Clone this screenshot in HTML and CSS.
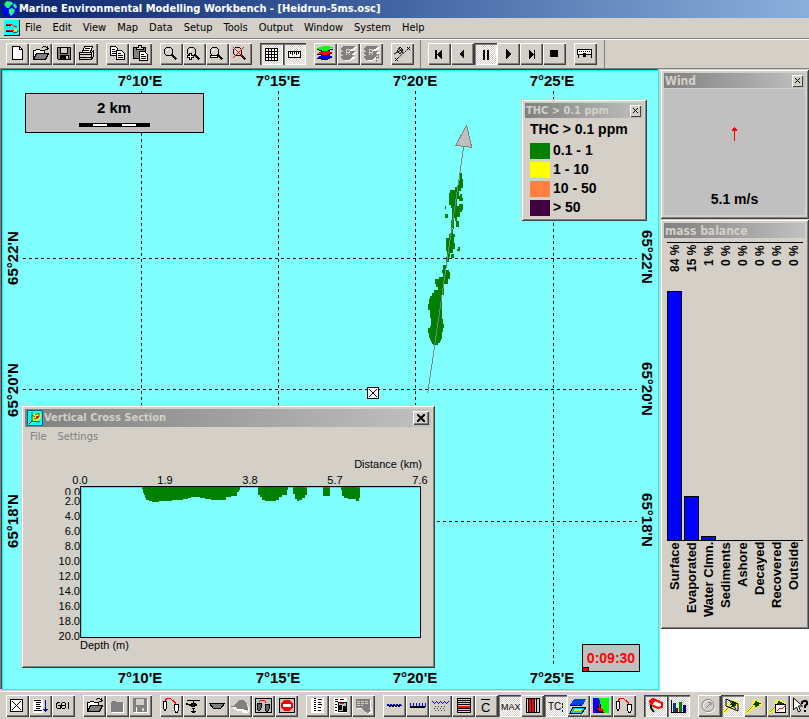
FILE: index.html
```html
<!DOCTYPE html>
<html lang="en">
<head>
<meta charset="utf-8">
<title>Marine Environmental Modelling Workbench</title>
<link rel="stylesheet" href="styles.css">
</head>
<body>
<svg class="defs" aria-hidden="true">
  <symbol id="open" viewBox="0 0 23 22"><path d="M4.500 16.500v-9h2l1-1h3l1 1h4v3" fill="#fff" stroke="#000"/><path d="M4.500 16.500l3-6h12l-3 6z" fill="#808080" stroke="#000"/><path d="M13 4.500h1M14 3.500h3M17 4.500h1M18 5h1v1M16 6.500h3M18.500 3v4" stroke="#000"/></symbol>
  <symbol id="save" viewBox="0 0 23 22"><path d="M5.500 4.500h13v12h-12l-1-1z" fill="#808080" stroke="#000"/><path d="M8 5h8v6H8z" fill="#d4d0c8"/><path d="M8.500 5v5.500h7V5" fill="none" stroke="#000"/><path d="M8 12h9v5H8z" fill="#000"/><path d="M14 13h2v3h-2z" fill="#d4d0c8"/></symbol>
  <symbol id="lens" viewBox="0 0 23 22"><path d="M6.500 4.500h4l2 2v4l-2 2h-4l-2-2v-4z" fill="#d4d0c8" stroke="#000"/><path d="M6 8V7h1V6h2" fill="none" stroke="#fff"/><path d="M11.500 11.500l5 5" stroke="#000" stroke-width="2"/></symbol>
  <symbol id="layers" viewBox="0 0 23 22"><path d="M5 14h13v1h-2v1h-2v1H7v-1H5zM5 10h13v1h-2v1h-2v1H7v-1H5zM5 6h14v1h-3v1h-2v1H7V8H5z" fill="#000"/><path d="M3 14h2v-1h3v-1h8v1h2v1h-2v1h-2v1H8v-1H4z" fill="#00f"/><path d="M3 10h2V9h3V8h8v1h2v1h-2v1h-2v1H8v-1H4z" fill="red"/><path d="M3 5h2V4h3V3h8v1h3v1h-3v2h-2v1H8V7H4z" fill="#0f0"/><path d="M3 6h2v1H3zM3 11h2v1H3zM3 15h2v1H3z" fill="#000"/></symbol>
  <symbol id="layers-off" viewBox="0 0 23 22"><path d="M5 15l3-1h11l-3 2-4 2H8zM4 11l4-2h12l-3 3-4 2H8zM4 7l4-3h12l-3 3-4 2H8z" fill="#fff"/><path d="M3 14l4-2h11l-4 3-2 2H7zM3 10l4-2h12l-4 3-2 2H7zM3 6l4-3h12l-4 3-5 3H7z" fill="#808080"/><path d="M9.500 6v6M10 6.500h2.500v2.500H10M11 9.500l2 2.500" stroke="#d4d0c8" fill="none"/></symbol>
  <symbol id="pins" viewBox="0 0 23 22"><path d="M3.500 6.500h3v7l-1 1.500h-1l-1-1.500z" fill="#fff" stroke="#000"/><path d="M14.500 9.500h4v6l-1 1.500h-2l-1-1.500z" fill="#fff" stroke="#000"/><path d="M5 5.500l2-2h3l3 2 3 3" fill="none" stroke="red"/></symbol>
  <symbol id="pins-box" viewBox="0 0 23 22"><path d="M3.500 3.500h16v14h-16z" fill="#c0c0c0" stroke="#000" stroke-width="1"/><path d="M5 8h4v5l-1 2H6l-1-2zM13 9h4v5l-1 2h-2l-1-2z" fill="#606060" stroke="#000"/><path d="M7.500 7l1-1.500h4l2 3" fill="none" stroke="red"/></symbol>
  <symbol id="spill" viewBox="0 0 23 22"><path d="M9 5h2l1 1 3-1 1 2h2v4h-3l-2 2-1-1h-2l-6 6H2v-2l6-6z" fill="#ff0"/><path d="M11 6h2v1h2v1h2v1h-2v2h-2v1h-2v-2H9V9h1V8h1z" fill="#042"/><path d="M3 17l6-6" stroke="#808080"/></symbol>
</svg>

<header class="titlebar">
  <svg class="globe" viewBox="0 0 16 16"><circle cx="8" cy="8" r="8" fill="#00f"/><path d="M2 3l3-3 5 1 1 2-3 2-1 2H5L3 5zM7 8l3-1 3 2-1 3-3 3-2-3zM12 2l3 3-1 3-3-3z" fill="#2f6"/><path d="M1 11l4 4 4 1-5-1z" fill="#006"/></svg>
  <h1>Marine Environmental Modelling Workbench - [Heidrun-5ms.osc]</h1>
</header>

<nav class="menubar" aria-label="Main menu">
  <svg class="docicon" viewBox="0 0 16 16"><path d="M0 0h16v16H0z" fill="#0ff"/><path d="M0 15.500h15.500V0" fill="none" stroke="#000"/><path d="M2 4.500h6l2 2h3M2 10.500h8" stroke="red" fill="none"/><path d="M2 5.500h5M2 11.500h7" stroke="#006" fill="none"/><path d="M10 9h3v2h-3z" fill="#ff0"/><path d="M9 12.500h4l1-2" stroke="#063" fill="none"/></svg>
  <button>File</button><button>Edit</button><button>View</button><button>Map</button><button>Data</button><button>Setup</button><button>Tools</button><button>Output</button><button>Window</button><button>System</button><button>Help</button>
</nav>

<div class="toolbar toolbar-top" role="toolbar" aria-label="Main tools">
  <div class="group">
    <button class="tool" aria-label="New"><svg viewBox="0 0 23 22"><path d="M6.500 3.500h7l3 3v10h-10z" fill="#fff" stroke="#000"/><path d="M13.500 3.500v3h3" fill="none" stroke="#000"/></svg></button>
    <button class="tool" aria-label="Open"><svg><use href="#open"/></svg></button>
    <button class="tool" aria-label="Save"><svg><use href="#save"/></svg></button>
    <button class="tool" aria-label="Print"><svg viewBox="0 0 23 22"><path d="M7.500 9l2-5.500h8L15.500 9" fill="#fff" stroke="#000"/><path d="M10 5.500h5M9 7.500h5" stroke="#000"/><path d="M4.500 9.500h12l2-2v6l-2 3h-12z" fill="#d4d0c8" stroke="#000"/><path d="M4 11.500h13M4 14.500h13M16.500 9v7" stroke="#000"/><path d="M12 13h3" stroke="#fff"/></svg></button>
  </div>
  <div class="group">
    <button class="tool" aria-label="Copy"><svg viewBox="0 0 23 22"><path d="M4.500 3.500h5l2 2v7h-7z" fill="#fff" stroke="#000"/><path d="M6 6.500h3M6 8.500h4M6 10.500h4" stroke="#000"/><path d="M10.500 7.500h5l3 3v6h-8z" fill="#fff" stroke="#000"/><path d="M12 10.500h3M12 12.500h5M12 14.500h5" stroke="#000"/></svg></button>
    <button class="tool" aria-label="Paste"><svg viewBox="0 0 23 22"><path d="M4.500 4.500h12v11h-12z" fill="#808080" stroke="#000"/><path d="M7.500 6.500v-2h2v-2h3v2h2v2z" fill="#d4d0c8" stroke="#000"/><path d="M10.500 8.500h5l3 3v6h-8z" fill="#fff" stroke="#000"/><path d="M12 11.500h3M12 13.500h5M12 15.500h5" stroke="#000"/></svg></button>
  </div>
  <div class="group">
    <button class="tool" aria-label="Zoom"><svg><use href="#lens"/></svg></button>
    <button class="tool" aria-label="Zoom in"><svg viewBox="0 0 23 22"><use href="#lens"/><path d="M6.500 10.500h2v2h2v2h-2v2h-2v-2h-2v-2h2z" fill="#fff" stroke="#000"/></svg></button>
    <button class="tool" aria-label="Zoom out"><svg viewBox="0 0 23 22"><use href="#lens"/><path d="M4.500 12.500h7v2h-7z" fill="#fff" stroke="#000"/></svg></button>
    <button class="tool" aria-label="Cancel zoom"><svg viewBox="0 0 23 22"><use href="#lens"/><path d="M4 4l11 11M15 4L4 15" stroke="red"/></svg></button>
  </div>
  <div class="group">
    <button class="tool pressed" aria-label="Grid" aria-pressed="true"><svg viewBox="0 0 23 22"><path d="M5.500 5.500h12v12h-12zM8.500 5v13M11.500 5v13M14.500 5v13M5 8.500h13M5 11.500h13M5 14.500h13" fill="#fff" stroke="#000"/></svg></button>
    <button class="tool pressed" aria-label="Scale" aria-pressed="true"><svg viewBox="0 0 23 22"><path d="M5.500 8.500h12v6h-12z" fill="#fff" stroke="#000"/><path d="M7.500 9v2M9.500 9v3M11.500 9v2M13.500 9v3M15.500 9v2" stroke="#000"/></svg></button>
  </div>
  <div class="group">
    <button class="tool" aria-label="Layers"><svg><use href="#layers"/></svg></button>
    <button class="tool" aria-label="Reset layers" disabled><svg><use href="#layers-off"/></svg></button>
    <button class="tool" aria-label="Query layers" disabled><svg viewBox="0 0 23 22"><use href="#layers-off"/><path d="M14.500 13v-2h4v3h-2v2M16.500 17v2" stroke="#808080" fill="none"/></svg></button>
  </div>
  <div class="group">
    <button class="tool" aria-label="Track"><svg class="smooth" viewBox="0 0 23 22"><path d="M4 15l3 3M4 18l3-3M16 4l3 3M16 7l3-3M3 11l9-5M8 5l4 5M6 8l3-4 3 3-3 4z" fill="none" stroke="#000"/><path d="M7 15l9-8" stroke="#000" stroke-dasharray="2 1"/></svg></button>
  </div>
  <div class="group divided">
    <button class="tool" aria-label="First"><svg viewBox="0 0 23 22"><path d="M7 7h2v9H7zM14 7v9l-5-4.500z"/></svg></button>
    <button class="tool" aria-label="Back"><svg viewBox="0 0 23 22"><path d="M13 6v10l-5-5z"/></svg></button>
    <button class="tool pressed" aria-label="Pause" aria-pressed="true"><svg viewBox="0 0 23 22"><path d="M9 7h2v10H9zM13 7h2v10h-2z"/></svg></button>
    <button class="tool" aria-label="Play"><svg viewBox="0 0 23 22"><path d="M9 6v10l5-5z"/></svg></button>
    <button class="tool" aria-label="Last"><svg viewBox="0 0 23 22"><path d="M9 7v9l5-4.500zM14 7h1v9h-1z"/></svg></button>
    <button class="tool" aria-label="Stop"><svg viewBox="0 0 23 22"><path d="M7 7h8v7H7z"/></svg></button>
  </div>
  <div class="group last">
    <button class="tool" aria-label="Time slider"><svg viewBox="0 0 23 22"><path d="M3.500 6.500h14v5h-14z" fill="#fff" stroke="#000"/><path d="M5 8.500h12" stroke="#000" stroke-dasharray="1 1"/><path d="M9 10h3v4H9zM4 12h1v3H4zM17 12h1v3h-1z"/></svg></button>
  </div>
</div>

<main class="workspace">
  <section class="map" aria-label="Map">
    <svg class="chart" viewBox="3 71 654 618" preserveAspectRatio="xMinYMin meet">
      <g class="graticule">
        <path d="M141.500 91V665M278.500 91V665M415.500 91V665M553.500 91V665"/>
        <path d="M23 258.500H637M23 389.500H637M23 521.500H637"/>
      </g>
      <g class="coords">
        <text x="140" y="86">7°10'E</text><text x="278" y="86">7°15'E</text><text x="415" y="86">7°20'E</text><text x="552" y="86">7°25'E</text>
        <text x="140" y="683">7°10'E</text><text x="278" y="683">7°15'E</text><text x="415" y="683">7°20'E</text><text x="552" y="683">7°25'E</text>
        <text transform="translate(18 258) rotate(-90)">65°22'N</text><text transform="translate(18 390) rotate(-90)">65°20'N</text><text transform="translate(18 521) rotate(-90)">65°18'N</text>
        <text transform="translate(642 257) rotate(90)">65°22'N</text><text transform="translate(642 389) rotate(90)">65°20'N</text><text transform="translate(642 520) rotate(90)">65°18'N</text>
      </g>
      <g class="scalebar">
        <rect x="25.500" y="93.500" width="178" height="39" fill="#c0c0c0" stroke="#000"/>
        <text x="114" y="113">2 km</text>
        <path d="M79 123h71v4H79z"/><path d="M93 124h14v2H93zM122 124h14v2h-14z" fill="#fff"/>
      </g>
      <svg x="400" y="100" width="260" height="300" viewBox="0 0 780 900">
        <path fill="green" d="M180 219h6v18h3v26h-6v9h-6v15h3v-6h6v12h3v9h-12v-6h-6v22h6v-6h12v18h-3v6h-6v15h-9v13h6v18h-9v-18h-3v-9h-3v33h-9v15h12v9h-3v18h3v18h-6v10h-9v14h-3v14h-9v-14h3v-18h-3v-39h9v-12h12v-18h-6v-25h3v-36h-3v-10h-6v-36h3v-9h15v-9h6v-6h6v-15h3z"/>
        <path fill="green" d="M135 317h3v9h-3zM135 343h9v12h-9zM174 440h6v14h-8v-8h2zM154 463h7v12h-7zM130 496h8v14h9v6h3v22h-6v14h-12v32h-6v73h3v16h3v12h-3v12h-3v18l-7 13h-6v8H100l-12-22v-15h-3v-16h5v-6h3v-24h-3v-22h-6v-18h3v-16h3v-10h6v-8h6v-10h12v-8h-6v-10h-3v-13h12v-6h12v-14h-3z"/>
        <path d="M191 140L83 880" stroke="#808080" stroke-width="3"/>
        <path d="M200 76l15 66-48-6z" fill="#c0c0c0" stroke="#808080" stroke-width="3"/>
      </svg>
      <g class="site"><path d="M367.500 387.500h11v11h-11z" fill="#fff"/><path d="M369 389l8 8M377 389l-8 8"/></g>
    </svg>

    <div class="clock"><time>0:09:30</time><i></i></div>

    <section class="window legend">
      <header class="caption"><h2>THC &gt; 0.1 ppm</h2><button class="close" aria-label="Close"><svg viewBox="0 0 7 7"><path d="M1 1l5 5M6 1L1 6"/></svg></button></header>
      <h3>THC &gt; 0.1 ppm</h3>
      <ul>
        <li><i class="c1"></i>0.1 - 1</li><li><i class="c2"></i>1 - 10</li><li><i class="c3"></i>10 - 50</li><li><i class="c4"></i>&gt; 50</li>
      </ul>
    </section>

    <section class="window section">
      <header class="caption">
        <svg class="icon" viewBox="0 0 16 16"><path d="M0 0h16v16H0z" fill="#0ff"/><path d="M.5.5h15v15H.5z" fill="none" stroke="#067"/><path d="M5 4h3l4-2 2 3-1 4-4 2-3 1z" fill="#ff0"/><path d="M5 2v9l8 1M5 5l3 2M8 5l4-2v4M7 9l4-1" fill="none" stroke="#063"/><path d="M9 6h3v2H9z" fill="red"/><path d="M2 14l3-3" stroke="#000"/></svg>
        <h2>Vertical Cross Section</h2><button class="close big" aria-label="Close"><svg viewBox="0 0 8 8"><path d="M0 0l8 8M8 0L0 8"/></svg></button>
      </header>
      <nav class="submenu" aria-label="Cross section menu"><button disabled>File</button><button disabled>Settings</button></nav>
      <svg class="profile" viewBox="25 447 406 217">
        <text x="422" y="468" class="end">Distance (km)</text>
        <g class="mid"><text x="80" y="484">0.0</text><text x="165" y="484">1.9</text><text x="250" y="484">3.8</text><text x="335" y="484">5.7</text><text x="420" y="484">7.6</text></g>
        <g class="end"><text x="80" y="496">0.0</text></g>
        <path d="M60 495h20v12H60z" fill="#d4d0c8"/>
        <g class="end"><text x="80" y="505">2.0</text><text x="80" y="520">4.0</text><text x="80" y="535">6.0</text><text x="80" y="550">8.0</text><text x="80" y="565">10.0</text><text x="80" y="580">12.0</text><text x="80" y="595">14.0</text><text x="80" y="610">16.0</text><text x="80" y="625">18.0</text><text x="80" y="640">20.0</text></g>
        <text x="80" y="649">Depth (m)</text>
        <rect x="80.500" y="486.500" width="340" height="151" fill="#80ffff" stroke="#000"/>
        <path d="M81.500 637V487.500H420" stroke="#0ff" fill="none"/>
        <path d="M142 487h98v3h-1v2h-2v4h-6v1h-5v3h-15v-1h-6v-1h-5v-1h-9v1h-3v1h-5v1h-11v1h-13v1h-7v-1h-3v-1h-3v-2h-1v-3h-1zM258 487h30v3h-1v5h-5v2h-3v3h-3v1h-11v-1h-3v-3h-2v-2h-2zM293 487h14v8h-2v3h-3v2h-3v1h-2v-2h-2v-5h-2zM323 487h7v9h-7zM341 487h19v11h-1v3h-3v-2h-8v-1h-4v-2h-2v-6h-1z" fill="green"/>
      </svg>
    </section>
  </section>

  <aside class="dock">
    <section class="window wind">
      <header class="caption"><h2>Wind</h2><button class="close" aria-label="Close"><svg viewBox="0 0 7 7"><path d="M1 1l5 5M6 1L1 6"/></svg></button></header>
      <div class="windbody">
        <svg class="arrow" viewBox="0 0 7 14"><path d="M3 0h1v14H3zM2 1h3v1h1v2H1V2h1z" fill="red"/></svg>
        <p>5.1 m/s</p>
      </div>
    </section>
    <section class="window balance">
      <header class="caption"><h2>mass balance</h2></header>
      <div class="columns shares"><span>84 %</span><span>15 %</span><span>1 %</span><span>0 %</span><span>0 %</span><span>0 %</span><span>0 %</span><span>0 %</span></div>
      <div class="columns bars"><b style="height:249px"></b><b style="height:44px"></b><b style="height:4px"></b></div>
      <div class="columns names"><span>Surface</span><span>Evaporated</span><span>Water Clmn.</span><span>Sediments</span><span>Ashore</span><span>Decayed</span><span>Recovered</span><span>Outside</span></div>
    </section>
  </aside>
</main>

<div class="toolbar toolbar-bottom" role="toolbar" aria-label="Model tools">
  <div class="group">
    <button class="tool" aria-label="Site"><svg viewBox="0 0 23 22"><path d="M4.500 4.500h12v12h-12z" fill="#fff" stroke="#000"/><path d="M6 6l9 9M15 6l-9 9" stroke="#000"/></svg></button>
    <button class="tool" aria-label="List"><svg viewBox="0 0 23 22"><path d="M4 4h10v14H4z" fill="#fff"/><path d="M5 5.500h7M7 7.500h5M7 9.500h4M7 11.500h5M7 13.500h4M5 15.500h8" stroke="#000"/><path d="M16 5h1v9h2l-2 3h-1l-2-3h2z" fill="#00a"/></svg></button>
    <button class="tool" aria-label="Currents"><svg viewBox="0 0 23 22"><path d="M8 7.500H5.500l-1 2v3l1 1H8v-3H6M9.500 8.500l1-1h2l1 1v4l-1 1h-2l-1-1zM9 10.500h5M16.500 7v7" fill="none" stroke="#000"/></svg></button>
  </div>
  <div class="group">
    <button class="tool" aria-label="Open run"><svg><use href="#open"/></svg></button>
    <button class="tool" aria-label="Close run" disabled><svg viewBox="0 0 23 22"><path d="M6 8h1V7h4v1h7v10H6z" fill="#fff"/><path d="M5 7h1V6h4v1h7v10H5z" fill="#808080"/></svg></button>
    <button class="tool" aria-label="Save run" disabled><svg viewBox="0 0 23 22"><path d="M5 4h14v14H5z" fill="#fff"/><path d="M4 3h14v14H4z" fill="#808080"/><path d="M7 4h8v6H7zM13 13h2v3h-2z" fill="#d4d0c8"/><path d="M7.500 12v5" stroke="#fff"/></svg></button>
  </div>
  <div class="group">
    <button class="tool" aria-label="Release"><svg><use href="#pins"/></svg></button>
    <button class="tool" aria-label="Aircraft"><svg viewBox="0 0 23 22"><path d="M4 5.500h13M10.500 5v3" stroke="#000"/><path d="M3 8h2v1h3V8h5v1h1v2h-2v1H8v-1H6v-1H3zM9 13h3v1h-3zM10 14h1v2h-1zM8 16h5v1H8zM9 17h3v1H9z"/></svg></button>
    <button class="tool" aria-label="Vessel"><svg viewBox="0 0 23 22"><path d="M3.500 8.500h15l-4 5h-7z" fill="#808080" stroke="#000"/></svg></button>
    <button class="tool" aria-label="Skimmer" disabled><svg viewBox="0 0 23 22"><path d="M4 12h6l3 2h3l2 3h2v-4l-2-4h1v9h-4l-3-2H9l-3-2H4z" fill="#fff"/><path d="M2 11h3l1-2 4-4h4l4 4 1 6h-3l-3-1H9l-3-2H2z" fill="#808080"/></svg></button>
    <button class="tool" aria-label="Boxed release"><svg><use href="#pins-box"/></svg></button>
    <button class="tool" aria-label="No entry"><svg viewBox="0 0 23 22"><path d="M4.500 3.500h15v14h-15z" fill="#c0c0c0" stroke="#000"/><circle cx="12" cy="10.500" r="6" fill="red"/><path d="M8 9h8v3H8z" fill="#fff"/></svg></button>
  </div>
  <div class="group">
    <button class="tool" aria-label="Report"><svg viewBox="0 0 23 22"><path d="M5 3h13v15H5z" fill="#fff"/><path d="M8 3.500h2M8 5.500h2M8 7.500h2M8 9.500h2M8 11.500h2M8 13.500h2M8 15.500h2M12 4.500h4M12 7.500h3M12 9.500h4M12 12.500h3M12 15.500h3" stroke="#000"/></svg></button>
    <button class="tool" aria-label="Release report"><svg viewBox="0 0 23 22"><path d="M5 3h13v15H5z" fill="#fff"/><path d="M6 4.500h3M6 6.500h3M11 4.500h4M6 9.500h2M6 12.500h2M6 15.500h2" stroke="#000"/><path d="M9.500 7.500h8v9h-8z" fill="#c0c0c0" stroke="#000"/><path d="M10 10h3v5h-3zM14 11h3v5h-3z"/><path d="M11 8.500h4" stroke="red"/></svg></button>
    <button class="tool" aria-label="Table" disabled><svg viewBox="0 0 23 22"><path d="M5 5h14v8l2 5-5 1-4-5H5z" fill="#fff"/><path d="M4 4h14v9H4z" fill="#808080"/><path d="M5 6.500h12M5 8.500h12M5 10.500h6" stroke="#d4d0c8" stroke-dasharray="3 1"/><path d="M9 11h8l2 5-3 2-3-1-4-4z" fill="#808080"/></svg></button>
  </div>
  <div class="group">
    <button class="tool" aria-label="Surface"><svg viewBox="0 0 23 22"><path d="M4 9.500h15" stroke="#00f" stroke-dasharray="2 1"/><path d="M4 10.500h15" stroke="#000080"/><path d="M6 11.500h12" stroke="#000" stroke-dasharray="2 1"/></svg></button>
    <button class="tool" aria-label="Subsurface"><svg viewBox="0 0 23 22"><path d="M4 8v3h15V8M7.500 8v3M10.500 8v3M13.500 8v3M16.500 8v3" fill="none" stroke="#00f"/><path d="M4 11h15v2H4z"/></svg></button>
    <button class="tool" aria-label="Particles"><svg viewBox="0 0 23 22"><path d="M3 6.500h1M7 6.500h1M11 6.500h1M15 6.500h1M19 6.500h1M4 7.500h1M6 7.500h1M8 7.500h1M10 7.500h1M12 7.500h1M14 7.500h1M16 7.500h1M18 7.500h1M5 8.500h1M9 8.500h1M13 8.500h1M17 8.500h1" stroke="#00f"/><path d="M6 11.500h12M5 13.500h12M6 15.500h10" stroke="#404040" stroke-dasharray="1 2"/></svg></button>
    <button class="tool" aria-label="Layer"><svg viewBox="0 0 23 22"><path d="M5.500 3.500h13v14h-13zM5 5.500h13M5 7.500h13M5 9.500h13M5 13.500h13M5 15.500h13" fill="none" stroke="#000"/><path d="M6 11h12v2H6z" fill="red"/></svg></button>
    <button class="tool" aria-label="Mean"><svg viewBox="0 0 23 22"><path d="M6 4.500h9" stroke="#000"/><text x="6" y="17" font-size="13">C</text></svg></button>
    <button class="tool pressed" aria-label="Maximum" aria-pressed="true"><svg viewBox="0 0 23 22"><text x="3" y="15" font-size="9">MAX</text></svg></button>
    <button class="tool" aria-label="Column"><svg viewBox="0 0 23 22"><path d="M5.500 3.500h13v14h-13zM7.500 4v14M13.500 4v14M15.500 4v14" fill="none" stroke="#000"/><path d="M8 4h2v13H8zM11 4h2v13h-2z" fill="red"/><path d="M10.500 4v14" stroke="#000"/></svg></button>
    <button class="tool pressed" aria-label="Total concentration" aria-pressed="true"><svg viewBox="0 0 23 22"><text x="4" y="15" font-size="10">TC</text><path d="M18 8h1v2h-1zM18 11h1v2h-1zM18 15h1v2h-1z"/></svg></button>
    <button class="tool" aria-label="Stack"><svg viewBox="0 0 23 22"><path d="M7 4h12l-3 6H3z" fill="#0040ff"/><path d="M3 10h12v1H3z"/><path d="M6 12h13l-4 6H3z" fill="#0cf" stroke="#000"/><path d="M8 14h7l-2 2H7z" fill="#ff0"/></svg></button>
    <button class="tool" aria-label="Shading"><svg viewBox="0 0 23 22"><path d="M3 3h7v15H3z" fill="#00f"/><path d="M9 3h10v15h-6z" fill="#0f0"/><path d="M9 9h2v4l3 5H9l-3-3z" fill="#000"/><path d="M9 9h1v4H9zM7 13h5l2 3H9z" fill="red"/></svg></button>
    <button class="tool" aria-label="Release points"><svg><use href="#pins"/></svg></button>
  </div>
  <div class="group">
    <button class="tool pressed" aria-label="Wind tool" aria-pressed="true"><svg class="smooth" viewBox="0 0 23 22"><path d="M6 6l3-2 9 4v4l-4 1-7-3z" fill="#fff" stroke="red" stroke-width="2"/><path d="M5 6l4-3 3 2-4 5z" fill="red"/><path d="M7 10v3l3 4" stroke="#000" stroke-width="2" fill="none"/></svg></button>
    <button class="tool pressed" aria-label="Mass balance" aria-pressed="true"><svg viewBox="0 0 23 22"><path d="M4 5h1v12h14v1H4z"/><path d="M6 8h3v9H6z" fill="#004080"/><path d="M9 13h2v4H9z" fill="#800000"/><path d="M12 7h3v10h-3z" fill="#008000"/><path d="M16 10h3v7h-3z" fill="#000080"/></svg></button>
  </div>
  <div class="group">
    <button class="tool" aria-label="Dial" disabled><svg class="smooth" viewBox="0 0 23 22"><circle cx="11" cy="11.500" r="6" fill="none" stroke="#fff"/><circle cx="10" cy="10.500" r="6" fill="none" stroke="#808080"/><path d="M8 13l5-5M10 7.500h3v3" stroke="#808080" fill="none"/></svg></button>
    <button class="tool pressed" aria-label="Cross section" aria-pressed="true"><svg class="smooth" viewBox="0 0 23 22"><use href="#spill"/><path d="M5 4v7l12 5V9zM8 5l7 9M14 8l-5 5" fill="none" stroke="#000"/></svg></button>
    <button class="tool" aria-label="Spill"><svg><use href="#spill"/></svg></button>
    <button class="tool" aria-label="Spill graph"><svg viewBox="0 0 23 22"><use href="#spill"/><path d="M8.500 9.500h10v8h-10z" fill="#fff" stroke="#000"/><path d="M10 16l3-3 2 1 3-3" fill="none" stroke="red"/></svg></button>
    <button class="tool" aria-label="Context help"><svg class="smooth" viewBox="0 0 23 22"><path d="M3.500 3v12l3-3 2 5 2-1-2-5h4z" fill="#fff" stroke="#000"/><path d="M12 9V7l2-1h2l1 1v2l-2 2v2M15 15v2" fill="none" stroke="#000" stroke-width="2"/></svg></button>
  </div>
</div>
</body>
</html>
```

FILE: styles.css
```css
* { box-sizing: border-box; margin: 0; padding: 0; }

:root {
  --face: #d4d0c8;
  --ui: "DejaVu Sans Condensed", "Liberation Sans", sans-serif;
}

body {
  display: flex;
  flex-direction: column;
  height: 100vh;
  overflow: hidden;
  background: var(--face);
  color: #000;
  font: 11px/14px var(--ui);
}

h1, h2, h3 { font-size: 11px; font-weight: bold; white-space: nowrap; }
button { font: inherit; color: inherit; background: none; border: 0; }
ul { list-style: none; }
svg { display: block; flex: none; }
.defs { position: absolute; width: 0; height: 0; }

/* Title and menu */
.titlebar {
  display: flex;
  align-items: center;
  gap: 1px;
  height: 18px;
  padding: 0 2px;
  background: linear-gradient(90deg, #0a246a, #4466a4 50%, #8cb0dc);
  color: #fff;
}
.globe { width: 16px; height: 16px; }
.menubar {
  display: flex;
  align-items: center;
  height: 20px;
  padding-left: 4px;
}
.docicon { width: 16px; height: 16px; }
.menubar button { padding: 0 6px 0 5px; }

/* Tool bars */
.toolbar {
  display: flex;
  flex: none;
  gap: 8px;
  padding-left: 6px;
  overflow: hidden;
}
.toolbar-top {
  height: 31px;
  padding-top: 3px;
  border-top: 1px solid #808080;
  border-bottom: 1px solid #808080;
  box-shadow: inset 0 1px #fff;
}
.toolbar-bottom {
  height: 28px;
  padding-top: 3px;
  border-top: 1px solid #fff;
}
.group { display: flex; flex: none; }
.toolbar-top .group { height: 23px; margin-top: 1px; }
.group.divided { position: relative; padding-left: 6px; }
.group.divided::before, .group.last::after {
  content: "";
  position: absolute;
  top: -3px;
  left: -2px;
  width: 1px;
  height: 28px;
  background: #808080;
}
.group.last { position: relative; }
.group.last::after { left: auto; right: -8px; }
.tool {
  width: 23px;
  height: 22px;
  background: var(--face);
  box-shadow: inset 1px 1px #fff, inset -1px -1px #404040, inset -2px -2px #808080;
}
.tool svg { width: 23px; height: 22px; shape-rendering: crispEdges; font-family: "Liberation Sans", sans-serif; }
.tool svg.smooth { shape-rendering: auto; }
.tool.pressed {
  background: repeating-conic-gradient(#fff 0 25%, var(--face) 0 50%) 0 0 / 2px 2px;
  box-shadow: inset 1px 1px #404040, inset 2px 2px #808080, inset -1px -1px #fff;
}

/* Work area */
.workspace { display: flex; flex: 1; min-height: 0; }
.map {
  position: relative;
  flex: 1;
  overflow: hidden;
  background: #80ffff;
  border: 1px solid #0ff;
  margin: 1px 0 1px 2px;
  box-shadow: -1px -1px #404040, -2px -1px #808080;
  font-family: "Liberation Sans", sans-serif;
}
.chart { width: 100%; height: 100%; font-weight: bold; font-size: 15px; shape-rendering: crispEdges; }
.graticule { stroke: #000; stroke-dasharray: 3 3; }
.coords, .scalebar { text-anchor: middle; }
.site { stroke: #000; }
.clock {
  position: absolute;
  right: 18px;
  bottom: 17px;
  display: flex;
  align-items: center;
  justify-content: center;
  width: 58px;
  height: 28px;
  background: #c0c0c0;
  border: 1px solid #000;
  color: #f00;
  font-size: 14px;
  font-weight: bold;
}
.clock i { position: absolute; left: -1px; bottom: -1px; width: 7px; height: 5px; background: #f00; border: 1px solid #000; }

/* Tool windows */
.window {
  background: var(--face);
  padding: 4px;
  box-shadow: inset 1px 1px var(--face), inset -1px -1px #404040, inset 2px 2px #fff, inset -2px -2px #808080;
}
.caption {
  display: flex;
  align-items: center;
  height: 15px;
  padding: 0 2px 0 1px;
  background: linear-gradient(90deg, #808080, #c0c0c0);
  color: var(--face);
}
.caption h2 { flex: 1; }
.close {
  display: grid;
  place-items: center;
  width: 11px;
  height: 12px;
  background: var(--face);
  box-shadow: inset 1px 1px #fff, inset -1px -1px #404040;
}
.close svg { width: 7px; height: 7px; stroke: #000; }
.close.big { width: 16px; height: 14px; box-shadow: inset 1px 1px #fff, inset -1px -1px #404040, inset -2px -2px #808080; }
.close.big svg { width: 8px; height: 8px; stroke-width: 2px; }

.legend { position: absolute; top: 28px; right: 11px; width: 126px; padding-bottom: 4px; font: bold 14px/19px "Liberation Sans", sans-serif; }
.legend h2 { font-family: var(--ui); }
.legend h3 { font-size: 14px; padding: 2px 5px; }
.legend li { display: flex; align-items: center; gap: 3px; padding-left: 5px; height: 19px; }
.legend i { width: 20px; height: 16px; }
.c1 { background: #008000; }
.c2 { background: #ff0; }
.c3 { background: #ff8040; }
.c4 { background: #400040; }

.section { position: absolute; left: 18px; bottom: 21px; width: 414px; font-family: var(--ui); }
.section .caption { height: 18px; gap: 1px; padding-left: 2px; }
.section .icon { width: 16px; height: 16px; }
.submenu { display: flex; height: 20px; align-items: center; color: #808080; }
.submenu button { padding: 0 6px 0 5px; }
.profile { width: 100%; font: 11px "Liberation Sans", sans-serif; shape-rendering: crispEdges; }
.mid { text-anchor: middle; }
.end { text-anchor: end; }

/* Dock */
.dock { flex: none; width: 150px; background: #fff; border-left: 1px solid var(--face); font-family: "Liberation Sans", sans-serif; }
.dock .caption { font-family: var(--ui); }
.dock .caption h2 { font-size: 12px; }
.wind { display: flex; flex-direction: column; height: 150px; }
.windbody { display: flex; flex: 1; flex-direction: column; align-items: center; justify-content: space-between; margin-top: 1px; padding: 38px 0 8px; background: #c0c0c0; font: bold 14px/16px "Liberation Sans", sans-serif; }
.arrow { width: 7px; height: 14px; }
.balance { height: 410px; }
.columns { display: grid; grid-template-columns: repeat(8, 17px); margin-left: 3px; font: bold 13px/16px "Liberation Sans", sans-serif; }
.columns span { writing-mode: vertical-rl; transform: rotate(180deg); white-space: nowrap; justify-self: start; text-align: right; }
.shares { height: 49px; margin-top: 4px; padding-top: 2px; border-top: 1px solid #000; font-size: 12px; width: 136px; }
.shares span { height: 28px; }
.bars { align-items: end; height: 250px; width: 136px; border-bottom: 1px solid #000; }
.bars b { width: 15px; background: #00f; border: 1px solid #000; border-bottom: 0; }
.names { margin-top: 1px; }
.names span { height: 80px; }
```
